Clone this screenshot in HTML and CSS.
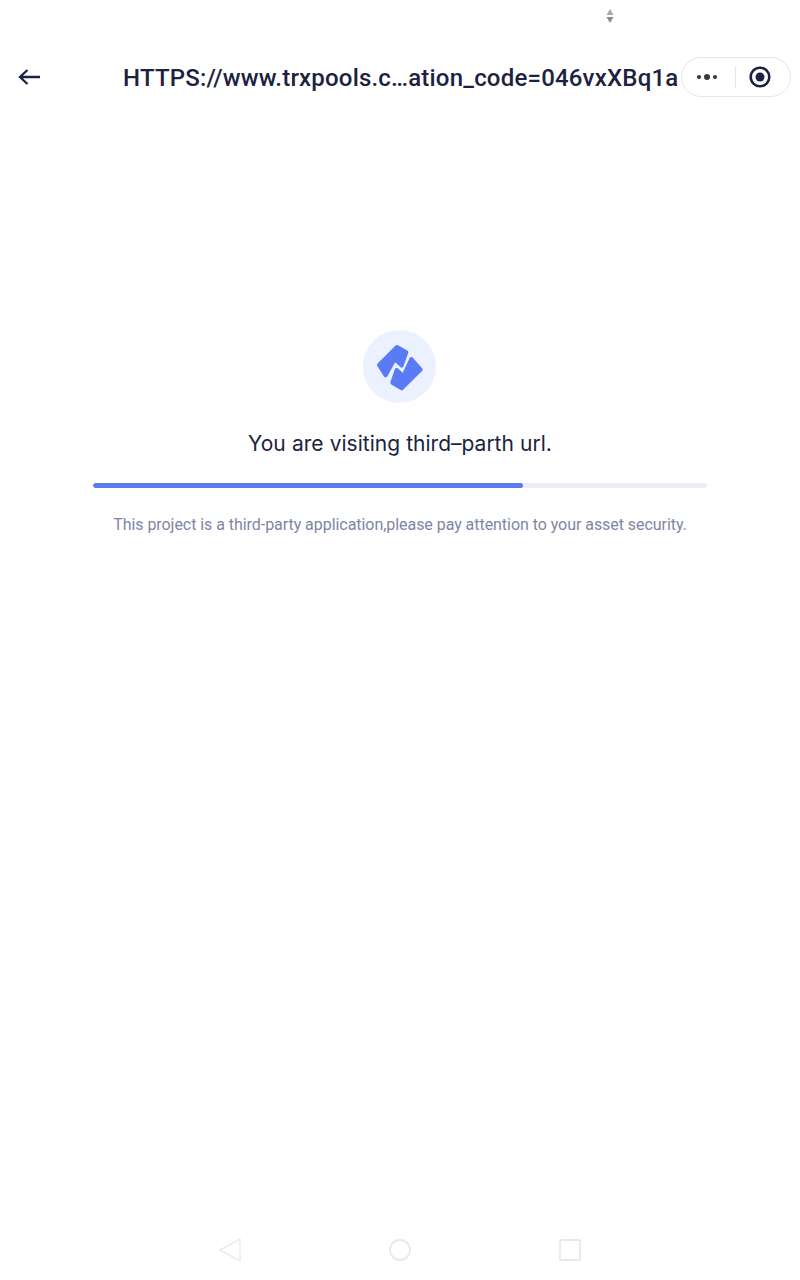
FILE: index.html
```html
<!DOCTYPE html>
<html lang="en">
<head>
<meta charset="utf-8">
<title>Third-party URL</title>
<link rel="stylesheet" href="styles.css">
</head>
<body>
<div class="screen">
  <div class="status">
    <svg class="signal" width="8" height="16" viewBox="0 0 8 16"><path d="M4 1 7.500 7H.5z" fill="#a9a9a9"/><path d="M4 15 7.500 9H.5z" fill="#8a8a8a"/></svg>
  </div>
  <header class="nav">
    <svg class="back" width="24" height="20" viewBox="0 0 24 20"><path d="M23 10H3M10.500 3 3 10l7.500 7" fill="none" stroke="#1c2340" stroke-width="2.300"/></svg>
    <div class="title">HTTPS://www.trxpools.c…ation_code=046vxXBq1a</div>
    <div class="capsule">
      <svg class="dots" width="22" height="8" viewBox="0 0 22 8"><circle cx="3" cy="4" r="2.100" fill="#3a3a3a"/><circle cx="11" cy="4" r="3" fill="#3a3a3a"/><circle cx="19" cy="4" r="2.100" fill="#3a3a3a"/></svg>
      <span class="sep"></span>
      <svg class="target" width="24" height="24" viewBox="0 0 24 24"><circle cx="12" cy="12" r="9.300" fill="none" stroke="#1c2340" stroke-width="2.600"/><circle cx="12" cy="12" r="4.500" fill="#1c2340"/></svg>
    </div>
  </header>
  <main class="content">
    <div class="logo">
      <svg width="56" height="52" viewBox="0 0 168 156"><g fill="#5a7bf6" stroke="#5a7bf6" stroke-width="12" stroke-linejoin="round"><path d="M21 72 75 18 103 34 89 74 68 54 41 103Z"/><path d="M118 54 146 86 89 142 61 125 74 87 94 105Z"/></g></svg>
    </div>
    <h1 class="heading">You are visiting third–parth url.</h1>
    <div class="track"><div class="bar" style="width:70%"></div></div>
    <p class="note">This project is a third-party application,please pay attention to your asset security.</p>
  </main>
  <footer class="sysnav">
    <svg width="24" height="26" viewBox="0 0 24 26"><path d="M22 2 2 13l20 11z" fill="none" stroke="#ececec" stroke-width="1.500" stroke-linejoin="round"/></svg>
    <svg width="24" height="26" viewBox="0 0 24 26"><circle cx="12" cy="13" r="10" fill="none" stroke="#e8e8e8" stroke-width="1.800"/></svg>
    <svg width="24" height="26" viewBox="0 0 24 26"><rect x="2" y="3" width="20" height="20" rx="1" fill="none" stroke="#e8e8e8" stroke-width="1.800"/></svg>
  </footer>
</div>
</body>
</html>
```
FILE: styles.css
```css
* { box-sizing: border-box; }
html, body { margin: 0; padding: 0; background: #fff; }
.screen {
  width: 800px;
  height: 1280px;
  display: flex;
  flex-direction: column;
  font-family: Roboto, "Liberation Sans", sans-serif;
  overflow: hidden;
}
.status {
  height: 57px;
  padding: 8px 0 0 606px;
  flex: none;
}
.signal { display: block; }
.nav {
  height: 40px;
  flex: none;
  display: flex;
  align-items: center;
  padding-left: 17px;
}
.back { flex: none; }
.title {
  margin-left: 82px;
  padding-top: 2px;
  width: 558px;
  flex: none;
  font-size: 24px;
  font-weight: 500;
  color: #1c2340;
  white-space: nowrap;
  letter-spacing: 0.19px;
}
.capsule {
  flex: none;
  width: 110px;
  height: 40px;
  border: 1px solid #e6e6e6;
  border-radius: 20px;
  display: flex;
  align-items: center;
  padding-left: 14px;
}
.sep { width: 1px; height: 22px; background: #e6e6e6; margin: 0 12px 0 17px; }
.dots, .target { display: block; flex: none; }
.content {
  flex: 1;
  display: flex;
  flex-direction: column;
  align-items: center;
  padding-top: 233px;
}
.logo {
  width: 73px;
  height: 73px;
  margin-left: -1px;
  border-radius: 50%;
  background: #ebf1fe;
  display: flex;
  align-items: center;
  justify-content: center;
}
.logo svg { display: block; flex: none; }
.heading {
  margin: 27px 0 0;
  font-family: Inter, Roboto, sans-serif;
  font-size: 21px;
  line-height: 28px;
  font-weight: 400;
  color: #1c2340;
  word-spacing: 0.3px;
}
.track {
  width: 614px;
  height: 5px;
  margin-top: 25px;
  border-radius: 3px;
  background: #ebedf7;
  overflow: hidden;
}
.bar { height: 100%; background: #5a7bf0; border-radius: 3px; }
.note {
  margin: 26px 0 0;
  font-size: 16px;
  line-height: 22px;
  color: #7e86a6;
  white-space: nowrap;
  letter-spacing: -0.05px;
}
.sysnav {
  flex: none;
  height: 60px;
  padding-top: 17px;
  display: flex;
  justify-content: center;
  align-items: flex-start;
  gap: 146px;
}
```
